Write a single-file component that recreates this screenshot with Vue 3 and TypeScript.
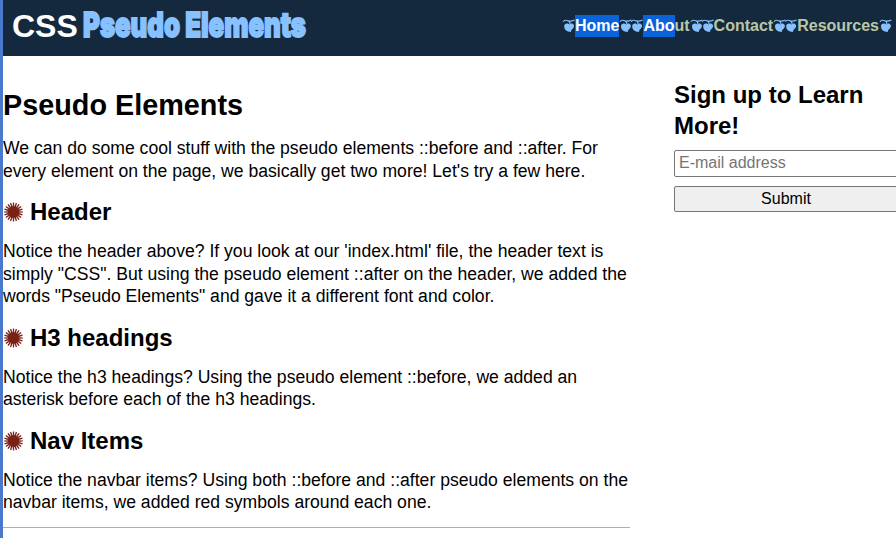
<script setup lang="ts">
import { ref } from 'vue'

interface Section {
  title: string
  lines: string[]
}

const email = ref('')

const intro: string[] = [
  'We can do some cool stuff with the pseudo elements ::before and ::after. For',
  "every element on the page, we basically get two more! Let's try a few here.",
]

const sections: Section[] = [
  {
    title: 'Header',
    lines: [
      "Notice the header above? If you look at our 'index.html' file, the header text is",
      'simply "CSS". But using the pseudo element ::after on the header, we added the',
      'words "Pseudo Elements" and gave it a different font and color.',
    ],
  },
  {
    title: 'H3 headings',
    lines: [
      'Notice the h3 headings? Using the pseudo element ::before, we added an',
      'asterisk before each of the h3 headings.',
    ],
  },
  {
    title: 'Nav Items',
    lines: [
      'Notice the navbar items? Using both ::before and ::after pseudo elements on the',
      'navbar items, we added red symbols around each one.',
    ],
  },
]

const nav = [
  { marked: 'Home', rest: '' },
  { marked: 'Abo', rest: 'ut' },
  { marked: '', rest: 'Contact' },
  { marked: '', rest: 'Resources' },
]

const spikes = Array.from({ length: 20 }, (_, i) => {
  const a = (i * Math.PI) / 10
  const p = (r: number, d: number) => `${(10 + r * Math.cos(a + d)).toFixed(2)} ${(10 + r * Math.sin(a + d)).toFixed(2)}`
  return `M${p(5, -0.15)}L${p(9.5, -0.065)}L${p(9.5, 0.065)}L${p(5, 0.15)}Z`
}).join('')
</script>

<template>
  <div class="page">
    <div class="edge"></div>
    <div class="site">
      <header>
        <h1>
          <span>CSS</span>
          <svg class="brand" width="240" height="52" viewBox="0 0 240 52">
            <text x="3" y="37" textLength="223" lengthAdjust="spacingAndGlyphs">Pseudo Elements</text>
          </svg>
        </h1>
        <nav>
          <a v-for="item in nav" :key="item.marked + item.rest">
            <svg v-for="side in 2" :key="side" class="leaf" :class="{ last: side === 2 }" width="12" height="14" :viewBox="side === 2 ? '-0.8 0 12 14' : '0 0 12 14'">
              <path class="vine" d="M.2 2.900C1 1.100 3 .9 4.800 1.700S8.800 2.300 11.600 1M5 1.700C6.600 2.300 7.200 3.400 6.800 4.800" />
              <path d="M6.300 5.600C5 3.900 1.200 4 1.200 7.300c0 3.200 2.300 5.500 7 5.700C7.700 12 8.300 11.200 9.500 10.100c1.300-1.100 2-2.600 1.400-4C10.100 4 7.300 3.900 6.300 5.600Z" />
            </svg>
            <span class="label"><mark v-if="item.marked">{{ item.marked }}</mark>{{ item.rest }}</span>
          </a>
        </nav>
      </header>
      <div class="columns">
        <main>
          <h2>Pseudo Elements</h2>
          <p><span v-for="line in intro" :key="line">{{ line }}</span></p>
          <section v-for="s in sections" :key="s.title">
            <h3>
              <svg width="21" height="20" viewBox="-0.5 0 21 20">
                <circle cx="10" cy="10" r="5.7" />
                <path :d="spikes" />
              </svg>
              {{ s.title }}
            </h3>
            <p><span v-for="line in s.lines" :key="line">{{ line }}</span></p>
          </section>
          <hr />
        </main>
        <aside>
          <h3>Sign up to Learn More!</h3>
          <form @submit.prevent>
            <input v-model="email" type="email" placeholder="E-mail address" />
            <button type="submit">Submit</button>
          </form>
        </aside>
      </div>
    </div>
  </div>
</template>

<style>
body {
  margin: 0;
  overflow: hidden;
  background: #fff;
}
</style>

<style scoped>
.page {
  display: flex;
  width: 896px;
  height: 538px;
  overflow: hidden;
  font-family: "Liberation Sans", Arial, sans-serif;
  color: #000;
}
.edge {
  width: 3px;
  flex: none;
  background: #4a78cc;
}
.site {
  width: 893px;
  flex: none;
}
header {
  display: flex;
  justify-content: space-between;
  align-items: center;
  height: 56px;
  box-sizing: border-box;
  padding: 0 5px 4px 9px;
  background: #14293d;
}
h1 {
  display: flex;
  align-items: center;
  gap: 2px;
  margin: 0;
  font-size: 32px;
  line-height: 40px;
  color: #fff;
}
.brand {
  overflow: visible;
}
.brand text {
  font-family: Inter, sans-serif;
  font-size: 34.5px;
  font-weight: 900;
  fill: #87c1ff;
  stroke: #87c1ff;
  stroke-width: 1.8px;
}
nav {
  display: flex;
}
nav a {
  display: flex;
  align-items: center;
  font-size: 16px;
  font-weight: bold;
  line-height: 22px;
  color: #b9c7a9;
}
.leaf {
  flex: none;
  overflow: visible;
  fill: #87c1ff;
}
.leaf.last {
  order: 3;
}
.label {
  order: 2;
}
.vine {
  fill: none;
  stroke: #87c1ff;
  stroke-width: 1.1;
}
mark {
  display: inline-block;
  background: #0a63d8;
  color: #fff;
}
.columns {
  display: flex;
  gap: 44px;
}
main {
  width: 627px;
  flex: none;
  padding-top: 29px;
}
h2 {
  margin: 0 0 12px;
  font-size: 28.8px;
  line-height: 40px;
}
p {
  margin: 0;
  font-size: 17.6px;
  line-height: 22.6px;
}
p span {
  display: block;
  white-space: nowrap;
}
h3 {
  margin: 0;
  font-size: 24px;
  line-height: 31px;
}
main h3 {
  display: flex;
  align-items: center;
  gap: 6px;
  padding: 14.3px 0 12.5px;
}
main h3 svg {
  fill: #7a2117;
}
hr {
  margin: 13.7px 0 0;
  border: 0;
  border-top: 1px solid #d2a67d;
}
aside {
  width: 224px;
  flex: none;
  padding-top: 23px;
}
form {
  display: flex;
  flex-direction: column;
  gap: 9px;
  padding-top: 9px;
}
input,
button {
  width: 224px;
  box-sizing: border-box;
  border: 1px solid #767676;
  border-radius: 2px;
  font: 16px "Liberation Sans", Arial, sans-serif;
  color: #000;
}
input {
  height: 27px;
  padding: 0 4px 2px;
}
input::placeholder {
  color: #757575;
}
button {
  height: 26px;
  padding: 0;
  background: #efefef;
}
</style>
